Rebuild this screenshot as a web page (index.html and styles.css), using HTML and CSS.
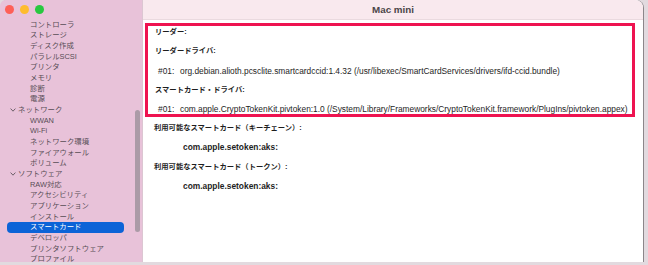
FILE: index.html
```html
<!DOCTYPE html>
<html lang="ja">
<head>
    <meta charset="UTF-8">
    <title>Mac mini</title>
    <link rel="stylesheet" href="styles.css">
</head>
<body>
    <div class="window">
        <aside class="sidebar">
            <div class="lights">
                <span class="light red"></span>
                <span class="light yellow"></span>
                <span class="light green"></span>
            </div>
            <ul class="tree">
                <li class="item">コントローラ</li>
                <li class="item">ストレージ</li>
                <li class="item">ディスク作成</li>
                <li class="item">パラレルSCSI</li>
                <li class="item">プリンタ</li>
                <li class="item">メモリ</li>
                <li class="item">診断</li>
                <li class="item">電源</li>
                <li class="group"><svg class="chev" width="6" height="4" viewBox="0 0 6 4"><path d="M0.6 0.6 L3 3.2 L5.4 0.6" fill="none" stroke="#6b5f68" stroke-width="1"/></svg>ネットワーク</li>
                <li class="item">WWAN</li>
                <li class="item">Wi-Fi</li>
                <li class="item">ネットワーク環境</li>
                <li class="item">ファイアウォール</li>
                <li class="item">ボリューム</li>
                <li class="group"><svg class="chev" width="6" height="4" viewBox="0 0 6 4"><path d="M0.6 0.6 L3 3.2 L5.4 0.6" fill="none" stroke="#6b5f68" stroke-width="1"/></svg>ソフトウェア</li>
                <li class="item">RAW対応</li>
                <li class="item">アクセシビリティ</li>
                <li class="item">アプリケーション</li>
                <li class="item">インストール</li>
                <li class="item selected">スマートカード</li>
                <li class="item">デベロッパ</li>
                <li class="item">プリンタソフトウェア</li>
                <li class="item">プロファイル</li>
            </ul>
            <div class="scroll-thumb"></div>
        </aside>
        <main class="main">
            <div class="titlebar">Mac mini</div>
            <div class="content">
                <div class="highlight">
                    <div class="label">リーダー:</div>
                    <div class="label">リーダードライバ:</div>
                    <div class="entry"><span class="num">#01:</span>org.debian.alioth.pcsclite.smartcardccid:1.4.32 (/usr/libexec/SmartCardServices/drivers/ifd-ccid.bundle)</div>
                    <div class="label">スマートカード・ドライバ:</div>
                    <div class="entry"><span class="num">#01:</span>com.apple.CryptoTokenKit.pivtoken:1.0 (/System/Library/Frameworks/CryptoTokenKit.framework/PlugIns/pivtoken.appex)</div>
                </div>
                <div class="rest">
                    <div class="label">利用可能なスマートカード（キーチェーン）:</div>
                    <div class="card">com.apple.setoken:aks:</div>
                    <div class="label">利用可能なスマートカード（トークン）:</div>
                    <div class="card">com.apple.setoken:aks:</div>
                </div>
            </div>
        </main>
    </div>
</body>
</html>
```

FILE: styles.css
```css
body {
    margin: 0;
    width: 648px;
    height: 265px;
    overflow: hidden;
    background: #e2dadf;
    font-family: "Liberation Sans", "Noto Sans CJK JP", sans-serif;
}
.window {
    display: flex;
    width: 643px;
    height: 262px;
    border-radius: 6px 8px 0 0;
    overflow: hidden;
    box-shadow: 1px 0 0 #8c868a;
}
.sidebar {
    position: relative;
    width: 143px;
    flex-shrink: 0;
    background: #e8c2d9;
    border-right: 1px solid #dcc6d2;
    box-sizing: border-box;
}
.lights {
    display: flex;
    gap: 6px;
    height: 19.7px;
    align-items: center;
    padding-left: 4.5px;
}
.light {
    width: 9px;
    height: 9px;
    border-radius: 50%;
}
.red { background: #fe5f57; }
.yellow { background: #febc2e; }
.green { background: #28c840; }
.tree {
    list-style: none;
    margin: 0;
    padding: 0;
}
.tree li {
    height: 10.68px;
    line-height: 10.68px;
    font-size: 7.4px;
    color: #574d55;
    white-space: nowrap;
}
.item {
    padding-left: 30px;
}
.group {
    display: flex;
    align-items: center;
    padding-left: 10px;
}
.chev {
    margin-right: 2px;
}
.item.selected {
    margin: 0 18px 0 7px;
    padding-left: 23px;
    background: #0c63d7;
    color: #fff;
    border-radius: 4px;
}
.scroll-thumb {
    position: absolute;
    left: 135px;
    top: 110px;
    width: 5px;
    height: 122px;
    border-radius: 3px;
    background: #ab9ba7;
}
.main {
    flex: 1;
    display: flex;
    flex-direction: column;
    background: #fff;
}
.titlebar {
    height: 19px;
    line-height: 19px;
    background: #f9e9ee;
    border-bottom: 1px solid #eadadf;
    text-align: center;
    font-size: 9.8px;
    font-weight: bold;
    color: #4b4548;
}
.content {
    flex: 1;
    padding: 3px 8px 0 2px;
}
.highlight {
    display: flex;
    flex-direction: column;
    gap: 7.3px;
    border: 3px solid #ee1350;
    padding: 0 0 0 7px;
    height: 88px;
}
.rest {
    display: flex;
    flex-direction: column;
    gap: 7.3px;
    margin-top: 5px;
    padding-left: 9px;
}
.label, .entry, .card {
    height: 12px;
    line-height: 12px;
    white-space: nowrap;
    color: #1e1e1e;
}
.label {
    font-size: 7.3px;
    font-weight: bold;
}
.entry {
    font-size: 8.35px;
    padding-left: 3px;
}
.num {
    display: inline-block;
    width: 22px;
}
.card {
    font-size: 8.4px;
    font-weight: bold;
    padding-left: 29px;
}
```
